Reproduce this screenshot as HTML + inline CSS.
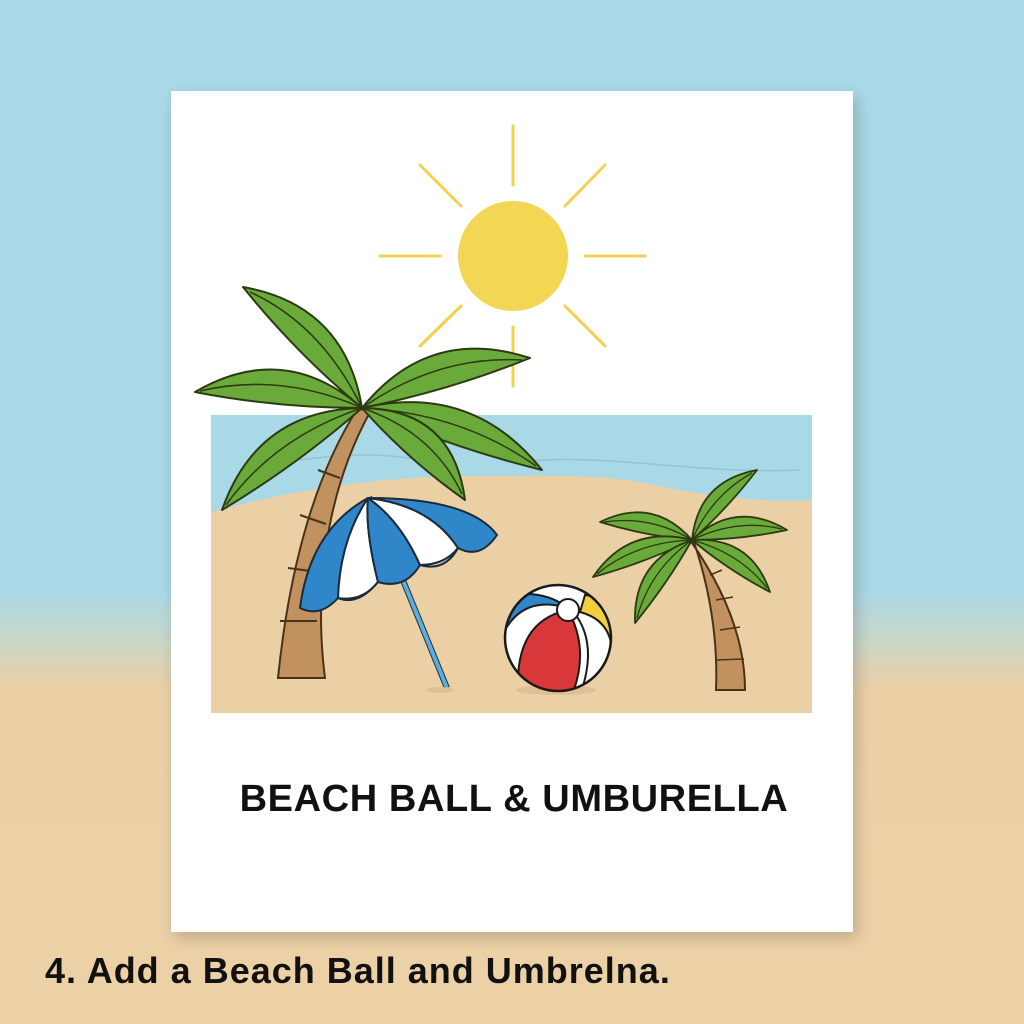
<!DOCTYPE html>
<html><head><meta charset="utf-8"><style>
html,body{margin:0;padding:0;width:1024px;height:1024px;overflow:hidden}
body{background:linear-gradient(#a9d8e6 0,#a9d8e6 590px,#c9d6c8 640px,#ebcfa5 690px,#ecd0a6 1024px);position:relative;font-family:"Liberation Sans",Arial,sans-serif}
.card{position:absolute;left:171px;top:91px;width:682px;height:841px;background:#fff;box-shadow:4px 6px 14px rgba(0,0,0,.18)}
.t1{position:absolute;left:0;width:1028px;top:778px;text-align:center;font-weight:bold;font-size:38px;color:#111;letter-spacing:0.6px}
.t2{position:absolute;left:45px;top:950px;font-weight:bold;font-size:36px;color:#111;letter-spacing:1px}
svg{position:absolute;left:0;top:0}
</style></head><body>
<div class="card"></div>
<svg width="1024" height="1024" viewBox="0 0 1024 1024">
<g stroke="#f2d050" stroke-width="3" stroke-linecap="round">
<line x1="513" y1="126" x2="513" y2="185"/><line x1="513" y1="327" x2="513" y2="386"/>
<line x1="380" y1="256" x2="440" y2="256"/><line x1="585" y1="256" x2="645" y2="256"/>
<line x1="420" y1="165" x2="461" y2="206"/><line x1="605" y1="165" x2="565" y2="206"/>
<line x1="420" y1="346" x2="461" y2="306"/><line x1="605" y1="346" x2="565" y2="306"/>
</g>
<circle cx="513" cy="256" r="55" fill="#f4d655"/>
<rect x="211" y="415" width="601" height="298" fill="#ebd0a6"/>
<path d="M211 415H812V500C760 503 700 495 640 482C590 474 540 476 480 476C420 476 330 480 211 512Z" fill="#a9d8e6"/>
<path d="M260 465C330 455 380 450 430 462M520 462C600 452 700 475 800 470" stroke="#92c6d6" stroke-width="1.5" fill="none"/>
<path d="M358 408C318 470 290 560 278 678H325C315 600 322 500 370 412Z" fill="#c1925f" stroke="#4a3218" stroke-width="2"/>
<g stroke="#4a3218" stroke-width="2"><line x1="318" y1="470" x2="340" y2="478"/><line x1="300" y1="515" x2="326" y2="524"/><line x1="288" y1="568" x2="318" y2="572"/><line x1="280" y1="621" x2="317" y2="621"/></g>
<g fill="#6aaa3a" stroke="#2c3a12" stroke-width="2" stroke-linejoin="round">
<path d="M362 408Q345 305 243 287Q296 353 362 408Z"/>
<path d="M362 408Q284 340 195 392Q277 408 362 408Z"/>
<path d="M362 408Q257 410 222 510Q297 465 362 408Z"/>
<path d="M362 408Q429 325 530 358Q448 391 362 408Z"/>
<path d="M362 408Q472 382 542 470Q449 447 362 408Z"/>
<path d="M362 408Q453 409 465 500Q408 460 362 408Z"/>
</g>
<g fill="none" stroke="#2c3a12" stroke-width="1.5">
<path d="M362 408Q322 325 250 292"/><path d="M362 408Q281 372 200 391"/><path d="M362 408Q275 437 226 505"/><path d="M362 408Q438 355 522 360"/><path d="M362 408Q461 413 536 466"/><path d="M362 408Q433 432 462 494"/>
</g>
<path d="M690 540C725 590 745 640 745 690H716C718 640 710 590 694 542Z" fill="#c1925f" stroke="#4a3218" stroke-width="2"/>
<g stroke="#4a3218" stroke-width="1.5"><line x1="710" y1="575" x2="722" y2="570"/><line x1="716" y1="600" x2="733" y2="597"/><line x1="720" y1="630" x2="740" y2="627"/><line x1="716" y1="660" x2="744" y2="659"/></g>
<g fill="#6aaa3a" stroke="#2c3a12" stroke-width="1.8" stroke-linejoin="round">
<path d="M692 540Q698 481 757 470Q728 508 692 540Z"/>
<path d="M692 540Q653 496 600 522Q645 536 692 540Z"/>
<path d="M692 540Q629 524 593 577Q644 563 692 540Z"/>
<path d="M692 540Q633 560 635 623Q667 584 692 540Z"/>
<path d="M692 540Q735 499 787 530Q740 540 692 540Z"/>
<path d="M692 540Q751 536 770 592Q728 570 692 540Z"/>
</g>
<g fill="none" stroke="#2c3a12" stroke-width="1.3">
<path d="M692 540Q712 495 752 473"/><path d="M692 540Q650 515 604 522"/><path d="M692 540Q636 542 597 574"/><path d="M692 540Q650 570 637 618"/><path d="M692 540Q737 518 782 529"/><path d="M692 540Q740 553 767 588"/>
</g>
<line x1="369" y1="497" x2="447" y2="688" stroke="#2c2c2c" stroke-width="6"/>
<line x1="369" y1="497" x2="447" y2="688" stroke="#5aaee6" stroke-width="4"/>
<ellipse cx="440" cy="690" rx="14" ry="3" fill="#dfbf95"/>
<g stroke="#1d2a3a" stroke-width="2" stroke-linejoin="round">
<path d="M368 498Q310 530 300 608Q320 618 338 598Q340 540 368 498Z" fill="#2f86c9"/>
<path d="M368 498Q340 540 338 598Q358 606 378 582Q365 530 368 498Z" fill="#fff"/>
<path d="M368 498Q365 530 378 582Q405 590 420 565Q400 520 368 498Z" fill="#2f86c9"/>
<path d="M368 498Q400 520 420 565Q445 565 458 548Q430 505 368 498Z" fill="#fff"/>
<path d="M368 498Q430 505 458 548Q480 560 497 535Q470 498 368 498Z" fill="#2f86c9"/>
<path d="M338 598Q358 606 378 582Q362 602 338 598Z" fill="#ddd"/>
<path d="M420 565Q445 565 458 548Q445 572 420 565Z" fill="#ddd"/>
</g>
<ellipse cx="556" cy="690" rx="40" ry="5" fill="#dfbf95"/>
<defs><clipPath id="b"><circle cx="558" cy="638" r="53"/></clipPath></defs>
<g clip-path="url(#b)" stroke="#1a1a1a" stroke-width="2">
<circle cx="558" cy="638" r="53" fill="#fff"/>
<path d="M505 630Q525 595 568 608Q545 590 510 595Z" fill="#2f86c9"/>
<path d="M580 612Q610 620 612 650L620 600L585 595Z" fill="#f3cf3a"/>
<path d="M568 610Q520 620 518 678Q540 695 572 695Q590 650 568 610Z" fill="#d9383a"/>
<path d="M570 608Q600 640 580 695" fill="none"/>
</g>
<circle cx="558" cy="638" r="53" fill="none" stroke="#1a1a1a" stroke-width="2.5"/>
<circle cx="568" cy="610" r="11" fill="#fff" stroke="#1a1a1a" stroke-width="2"/>
</svg>
<div class="t1">BEACH BALL &amp; UMBURELLA</div>
<div class="t2">4. Add a Beach Ball and Umbrelna.</div>
</body></html>
